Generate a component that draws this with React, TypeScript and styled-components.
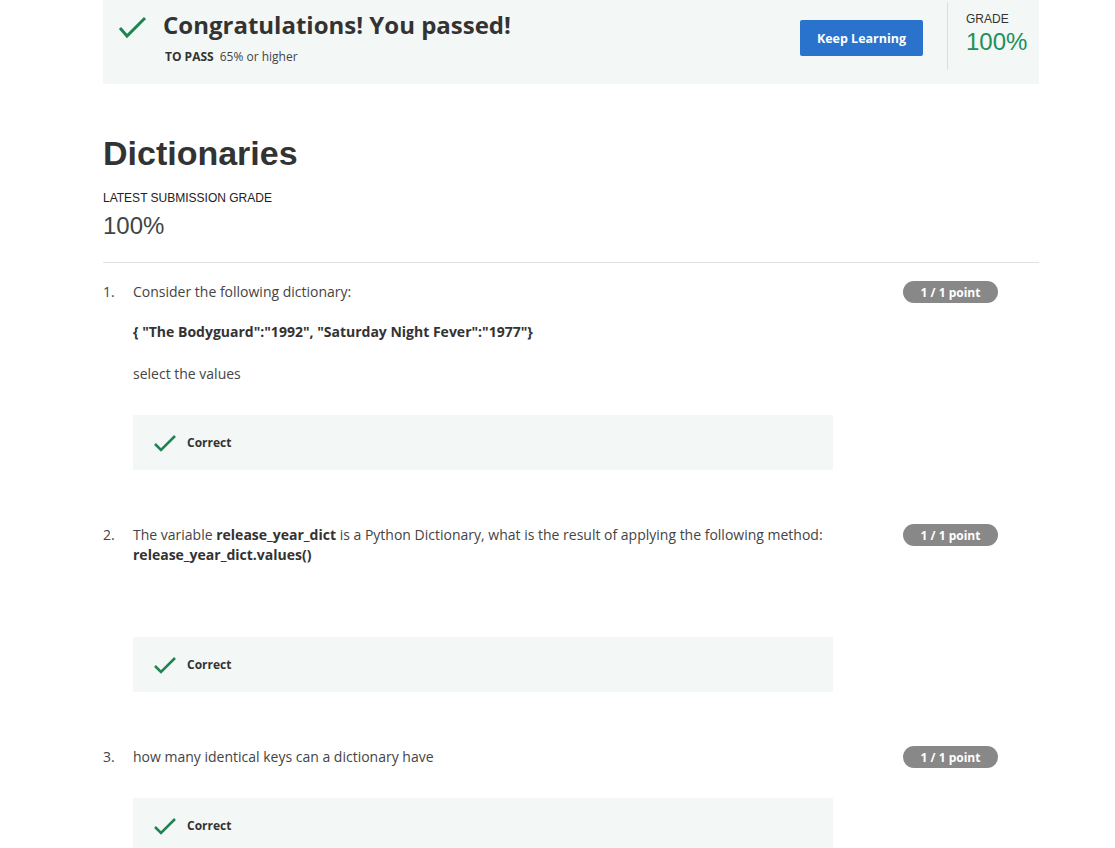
import React from "react";
import styled, { createGlobalStyle } from "styled-components";

const Global = createGlobalStyle`
  html, body { margin: 0; padding: 0; background: #ffffff; }
  body { font-family: "Open Sans", "Noto Sans", sans-serif; color: #333333; }
  * { box-sizing: border-box; }
`;

const Page = styled.div`
  width: 936px;
  margin-left: 103px;
`;

const Banner = styled.div`
  display: flex;
  align-items: flex-start;
  height: 84px;
  background: #f3f8f6;
  padding-left: 15px;
`;

const BannerCheck = styled.div`
  width: 30px;
  height: 24px;
  margin-top: 15px;
  display: flex;
`;

const TitleBlock = styled.div`
  margin-left: 15px;
  margin-top: 10px;
  display: flex;
  flex-direction: column;
`;

const Title = styled.h2`
  margin: 0;
  font-size: 24px;
  line-height: 30px;
  font-weight: 700;
  color: #333333;
`;

const PassLine = styled.div`
  margin-top: 9px;
  padding-left: 2px;
  font-size: 12px;
  line-height: 16px;
  color: #444444;
  display: flex;
  gap: 6px;
`;

const PassLabel = styled.span`
  font-weight: 700;
  color: #333333;
`;

const Spacer = styled.div`
  flex: 1;
`;

const Button = styled.button`
  margin-top: 20px;
  width: 123px;
  height: 36px;
  border: none;
  border-radius: 2px;
  background: #2a73cc;
  color: #ffffff;
  font-family: "Open Sans", sans-serif;
  font-weight: 700;
  font-size: 12.5px;
  padding: 0;
`;

const Divider = styled.div`
  width: 1px;
  height: 68px;
  margin: 2px 0 0 24px;
  background: #dddddd;
`;

const GradeBlock = styled.div`
  width: 91px;
  padding-left: 18px;
  display: flex;
  flex-direction: column;
`;

const GradeLabel = styled.div`
  margin-top: 12px;
  font-family: "Liberation Sans", Arial, sans-serif;
  font-size: 12px;
  line-height: 14px;
  color: #333333;
`;

const GradeValue = styled.div`
  margin-top: 2px;
  font-family: "Liberation Sans", Arial, sans-serif;
  font-size: 24px;
  line-height: 28px;
  color: #218f5a;
`;

const Heading = styled.h1`
  margin: 0;
  margin-top: 49px;
  font-family: "Liberation Sans", Arial, sans-serif;
  font-size: 34px;
  line-height: 40px;
  font-weight: 700;
  color: #333333;
`;

const SubLabel = styled.div`
  margin-top: 18px;
  font-family: "Liberation Sans", Arial, sans-serif;
  font-size: 12px;
  line-height: 14px;
  color: #222222;
`;

const SubValue = styled.div`
  margin-top: 7px;
  font-family: "Liberation Sans", Arial, sans-serif;
  font-size: 24px;
  line-height: 28px;
  font-weight: 300;
  color: #444444;
`;

const Rule = styled.hr`
  margin: 22px 0 0;
  border: none;
  border-top: 1px solid #e1e1e1;
  height: 0;
`;

const QuestionList = styled.div`
  padding-top: 19px;
  display: flex;
  flex-direction: column;
  gap: 55px;
`;

const Question = styled.div`
  display: grid;
  grid-template-columns: 30px 700px 70px 95px;
  align-items: start;
`;

const Num = styled.div`
  font-size: 14px;
  line-height: 20px;
  color: #444444;
`;

const Body = styled.div`
  display: flex;
  flex-direction: column;
`;

const Para = styled.p<{ $gap?: number }>`
  margin: 0;
  margin-top: ${(p) => p.$gap ?? 0}px;
  font-size: 14px;
  line-height: 20px;
  color: #444444;
  b { color: #333333; font-weight: 700; }
`;

const CorrectBox = styled.div<{ $gap: number }>`
  margin-top: ${(p) => p.$gap}px;
  height: 55px;
  background: #f3f8f6;
  display: flex;
  align-items: center;
  padding-left: 20px;
  gap: 10px;
`;

const CorrectText = styled.span`
  font-size: 12px;
  font-weight: 700;
  color: #333333;
`;

const Badge = styled.div`
  grid-column: 4;
  margin-top: -1px;
  height: 22px;
  border-radius: 11px;
  background: #888888;
  color: #ffffff;
  font-size: 12px;
  font-weight: 700;
  display: flex;
  align-items: center;
  justify-content: center;
`;

const BigCheck = () => (
  <svg width="30" height="24" viewBox="0 0 30 24">
    <polyline points="2,13 9,21 27,3" fill="none" stroke="#1f8354" strokeWidth="3" />
  </svg>
);

const SmallCheck = () => (
  <svg width="24" height="20" viewBox="0 0 24 20">
    <polyline points="2,11 8,17 22,3" fill="none" stroke="#1f8354" strokeWidth="2.6" />
  </svg>
);

type Q = { n: number; content: React.ReactNode; boxGap: number };

const questions: Q[] = [
  {
    n: 1,
    content: (
      <>
        <Para>Consider the following dictionary:</Para>
        <Para $gap={20}>
          <b>{'{ "The Bodyguard":"1992", "Saturday Night Fever":"1977"}'}</b>
        </Para>
        <Para $gap={22}>select the values</Para>
      </>
    ),
    boxGap: 31,
  },
  {
    n: 2,
    content: (
      <Para>
        The variable <b>release_year_dict</b> is a Python Dictionary, what is the result of applying the following method:{" "}
        <b>release_year_dict.values()</b>
      </Para>
    ),
    boxGap: 72,
  },
  {
    n: 3,
    content: <Para>how many identical keys can a dictionary have</Para>,
    boxGap: 31,
  },
];

export default function App() {
  return (
    <>
      <Global />
      <Page>
        <Banner>
          <BannerCheck>
            <BigCheck />
          </BannerCheck>
          <TitleBlock>
            <Title>Congratulations! You passed!</Title>
            <PassLine>
              <PassLabel>TO PASS</PassLabel>
              <span>65% or higher</span>
            </PassLine>
          </TitleBlock>
          <Spacer />
          <Button>Keep Learning</Button>
          <Divider />
          <GradeBlock>
            <GradeLabel>GRADE</GradeLabel>
            <GradeValue>100%</GradeValue>
          </GradeBlock>
        </Banner>
        <Heading>Dictionaries</Heading>
        <SubLabel>LATEST SUBMISSION GRADE</SubLabel>
        <SubValue>100%</SubValue>
        <Rule />
        <QuestionList>
          {questions.map((q) => (
            <Question key={q.n}>
              <Num>{q.n}.</Num>
              <Body>
                {q.content}
                <CorrectBox $gap={q.boxGap}>
                  <SmallCheck />
                  <CorrectText>Correct</CorrectText>
                </CorrectBox>
              </Body>
              <Badge>1 / 1 point</Badge>
            </Question>
          ))}
        </QuestionList>
      </Page>
    </>
  );
}
